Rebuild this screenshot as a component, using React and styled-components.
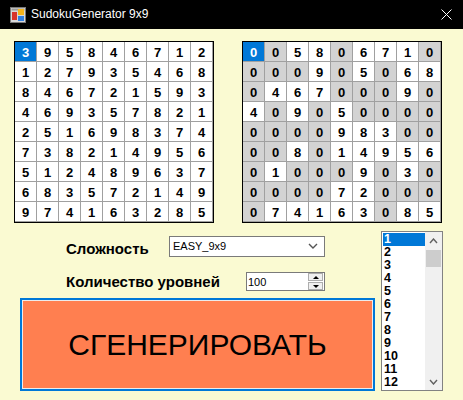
import React from "react";
import styled, { createGlobalStyle } from "styled-components";

const Global = createGlobalStyle`
  html, body { margin: 0; padding: 0; background: #fafad2; }
  body { font-family: "Liberation Sans", Arial, sans-serif; }
`;

const solved = [
  [3, 9, 5, 8, 4, 6, 7, 1, 2],
  [1, 2, 7, 9, 3, 5, 4, 6, 8],
  [8, 4, 6, 7, 2, 1, 5, 9, 3],
  [4, 6, 9, 3, 5, 7, 8, 2, 1],
  [2, 5, 1, 6, 9, 8, 3, 7, 4],
  [7, 3, 8, 2, 1, 4, 9, 5, 6],
  [5, 1, 2, 4, 8, 9, 6, 3, 7],
  [6, 8, 3, 5, 7, 2, 1, 4, 9],
  [9, 7, 4, 1, 6, 3, 2, 8, 5],
];

const puzzle = [
  [0, 0, 5, 8, 0, 6, 7, 1, 0],
  [0, 0, 0, 9, 0, 5, 0, 6, 8],
  [0, 4, 6, 7, 0, 0, 0, 9, 0],
  [4, 0, 9, 0, 5, 0, 0, 0, 0],
  [0, 0, 0, 0, 9, 8, 3, 0, 0],
  [0, 0, 8, 0, 1, 4, 9, 5, 6],
  [0, 1, 0, 0, 0, 9, 0, 3, 0],
  [0, 0, 0, 0, 7, 2, 0, 0, 0],
  [0, 7, 4, 1, 6, 3, 0, 8, 5],
];

const Window = styled.div`
  width: 463px;
  height: 400px;
  display: flex;
  flex-direction: column;
  overflow: hidden;
  background: #fafad2;
`;

const TitleBar = styled.div`
  height: 29px;
  flex: none;
  background: #000;
  display: flex;
  align-items: center;
  padding: 0 11px 0 10px;
  color: #fff;
`;

const TitleText = styled.span`
  font-family: "Liberation Sans", Arial, sans-serif;
  font-size: 12px;
  margin-left: 5px;
  flex: 1;
  padding-bottom: 1px;
`;

const Client = styled.div`
  flex: 1;
  padding: 12px 0 0 14px;
  display: flex;
  flex-direction: column;
`;

const Boards = styled.div`
  display: flex;
  gap: 28px;
`;

const Board = styled.div`
  display: grid;
  grid-template-columns: repeat(9, 21px);
  grid-auto-rows: 19px;
  gap: 1px;
  padding: 0 1px 1px 0;
  background: #a0a0a0;
  border: 1px solid #000;
`;

const Cell = styled.div`
  display: flex;
  align-items: center;
  justify-content: center;
  font-weight: bold;
  font-size: 13px;
  padding-top: 2px;
  box-sizing: border-box;
  background: ${(p) => (p.$selected ? "#0078d7" : p.$empty ? "#d3d3d3" : "#fff")};
  color: ${(p) => (p.$selected ? "#fff" : "#000")};
`;

const Bottom = styled.div`
  display: flex;
  gap: 6px;
  margin: 8px 0 0 6px;
`;

const Controls = styled.div`
  width: 355px;
  display: flex;
  flex-direction: column;
  padding-top: 4px;
`;

const FieldRow = styled.div`
  display: flex;
  align-items: center;
  padding-left: 46px;
  margin-bottom: ${(p) => p.$gap}px;
`;

const Label = styled.span`
  width: ${(p) => p.$w}px;
  flex: none;
  font-weight: bold;
  font-size: 15px;
  margin-top: ${(p) => p.$dy || 0}px;
`;

const Combo = styled.div`
  width: 156px;
  height: 21px;
  box-sizing: border-box;
  border: 1px solid #7a7a7a;
  background: #fff;
  display: flex;
  align-items: center;
  justify-content: space-between;
  padding: 0 6px 0 3px;
  font-size: 11px;
`;

const Numeric = styled.div`
  width: 79px;
  height: 19px;
  box-sizing: border-box;
  border: 1px solid #7a7a7a;
  background: #fff;
  display: flex;
  align-items: stretch;
  font-size: 11px;
`;

const NumText = styled.span`
  flex: 1;
  display: flex;
  align-items: center;
  padding-left: 1px;
`;

const Spin = styled.div`
  width: 15px;
  display: flex;
  flex-direction: column;
  gap: 1px;
  padding: 0 1px 0 0;
`;

const SpinBtn = styled.div`
  flex: 1;
  background: #f0f0f0;
  border: 1px solid #adadad;
  display: flex;
  align-items: center;
  justify-content: center;
  &::after {
    content: "";
    border-left: 3px solid transparent;
    border-right: 3px solid transparent;
    ${(p) => (p.$up ? "border-bottom: 3px solid #000;" : "border-top: 3px solid #000;")}
  }
`;

const GenerateButton = styled.button`
  width: 355px;
  height: 93px;
  box-sizing: border-box;
  border: 2px solid #0078d7;
  box-shadow: inset 0 0 0 1px #ececec;
  background: #ff7f50;
  font-family: "Liberation Sans", Arial, sans-serif;
  font-size: 30px;
  color: #000;
  padding: 0;
  margin-top: 7px;
  cursor: pointer;
`;

const ListBox = styled.div`
  width: 62px;
  height: 160px;
  box-sizing: border-box;
  border: 1px solid #828282;
  background: #fff;
  display: flex;
  padding: 1px 0 0 1px;
`;

const Items = styled.div`
  flex: 1;
  display: flex;
  flex-direction: column;
  overflow: hidden;
`;

const Item = styled.div`
  height: 13px;
  flex: none;
  line-height: 13px;
  font-size: 12.5px;
  font-weight: bold;
  padding-left: 1px;
  background: ${(p) => (p.$selected ? "#0078d7" : "transparent")};
  color: ${(p) => (p.$selected ? "#fff" : "#000")};
`;

const ScrollBar = styled.div`
  width: 17px;
  margin-top: -1px;
  background: #f0f0f0;
  display: flex;
  flex-direction: column;
`;

const ScrollArrow = styled.div`
  height: 17px;
  display: flex;
  align-items: center;
  justify-content: center;
`;

const Thumb = styled.div`
  height: 17px;
  margin: 1px 1px 0 1px;
  background: #cdcdcd;
`;

const Track = styled.div`
  flex: 1;
`;

const Chevron = ({ up, color = "#606060", w = 7, h = 4 }) => (
  <svg width={w + 2} height={h + 2} viewBox={`0 0 ${w + 2} ${h + 2}`}>
    <polyline
      points={
        up
          ? `1,${h + 1} ${(w + 2) / 2},1 ${w + 1},${h + 1}`
          : `1,1 ${(w + 2) / 2},${h + 1} ${w + 1},1`
      }
      fill="none"
      stroke={color}
      strokeWidth="1.4"
    />
  </svg>
);

const AppIcon = () => (
  <svg width="16" height="16" viewBox="0 0 16 16">
    <rect x="0.5" y="0.5" width="15" height="15" fill="#d8d8d8" stroke="#7a7a7a" />
    <rect x="1.5" y="1.5" width="13" height="2" fill="#9a9a9a" />
    <rect x="2" y="5" width="5" height="8" fill="#d8342c" />
    <rect x="8" y="2" width="6" height="6" fill="#f4b41a" />
    <rect x="8" y="9" width="6" height="5" fill="#2f7fe0" />
  </svg>
);

const CloseIcon = () => (
  <svg width="11" height="11" viewBox="0 0 11 11">
    <path d="M0.5 0.5 L10.5 10.5 M10.5 0.5 L0.5 10.5" stroke="#fff" strokeWidth="1" />
  </svg>
);

const SudokuBoard = ({ data, markEmpty }) => (
  <Board>
    {data.flatMap((row, r) =>
      row.map((v, c) => (
        <Cell key={`${r}-${c}`} $selected={r === 0 && c === 0} $empty={markEmpty && v === 0}>
          {v}
        </Cell>
      ))
    )}
  </Board>
);

export default function App() {
  const items = Array.from({ length: 12 }, (_, i) => i + 1);
  return (
    <>
      <Global />
      <Window>
        <TitleBar>
          <AppIcon />
          <TitleText>SudokuGenerator 9x9</TitleText>
          <CloseIcon />
        </TitleBar>
        <Client>
          <Boards>
            <SudokuBoard data={solved} />
            <SudokuBoard data={puzzle} markEmpty />
          </Boards>
          <Bottom>
            <Controls>
              <FieldRow $gap={15}>
                <Label $w={103} $dy={5}>Сложность</Label>
                <Combo>
                  <span>EASY_9x9</span>
                  <Chevron color="#555" w={8} h={4} />
                </Combo>
              </FieldRow>
              <FieldRow $gap={0}>
                <Label $w={180}>Количество уровней</Label>
                <Numeric>
                  <NumText>100</NumText>
                  <Spin>
                    <SpinBtn $up />
                    <SpinBtn />
                  </Spin>
                </Numeric>
              </FieldRow>
              <GenerateButton>СГЕНЕРИРОВАТЬ</GenerateButton>
            </Controls>
            <ListBox>
              <Items>
                {items.map((n) => (
                  <Item key={n} $selected={n === 1}>
                    {n}
                  </Item>
                ))}
              </Items>
              <ScrollBar>
                <ScrollArrow>
                  <Chevron up />
                </ScrollArrow>
                <Thumb />
                <Track />
                <ScrollArrow>
                  <Chevron />
                </ScrollArrow>
              </ScrollBar>
            </ListBox>
          </Bottom>
        </Client>
      </Window>
    </>
  );
}
